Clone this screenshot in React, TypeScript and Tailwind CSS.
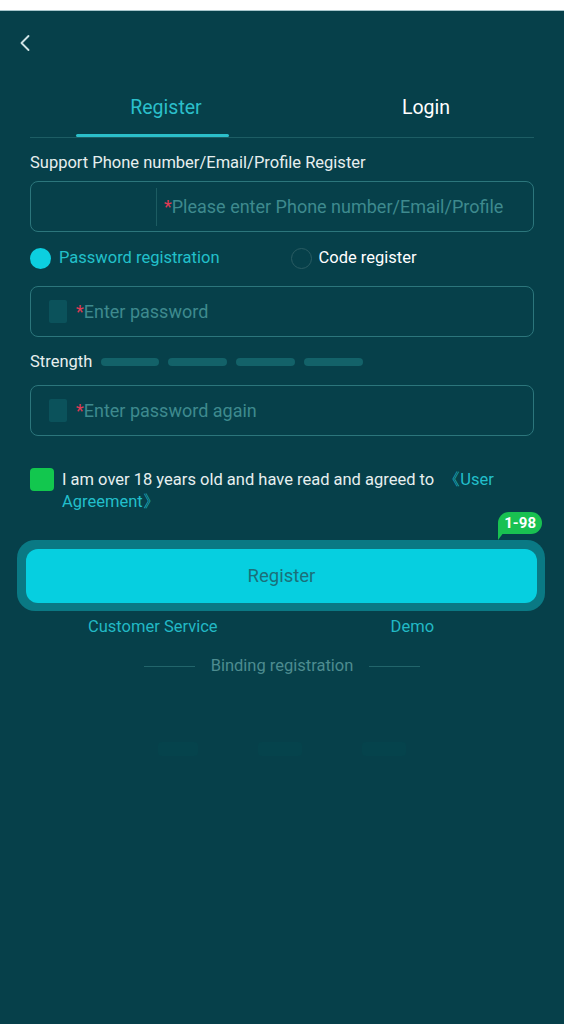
import { ChevronLeft } from "lucide-react";

function Field({ placeholder, square }: { placeholder: string; square?: boolean }) {
  return (
    <div className="h-[51px] rounded-[8px] border border-[#2c767c] flex items-center">
      {square && <div className="ml-[18px] w-[18px] h-[23px] rounded-[2px] bg-[#0b525b]" />}
      <span className="ml-[9px] text-[18px] text-[#3e8a8e]">
        <span className="text-[#e23a55]">*</span>
        {placeholder}
      </span>
    </div>
  );
}

export default function App() {
  return (
    <div className="min-h-[1024px] w-full bg-[#06404a] font-['Roboto',sans-serif]">
      <div className="h-[10px] bg-white" />
      <div className="h-px bg-[#a7c6cc]" />

      {/* header */}
      <div className="h-[64px] flex items-center pl-[11px]">
        <ChevronLeft size={28} strokeWidth={1.6} className="text-[#cfe3e5]" />
      </div>

      <div className="px-[30px]">
        {/* tabs */}
        <div className="flex border-b border-[#1d5d64]">
          <div className="w-[272px] flex flex-col pt-[19px]">
            <div className="h-[28px] flex items-center justify-center text-[19.5px] text-[#2bbfca]">
              Register
            </div>
            <div className="mt-[12px] ml-[46px] w-[153px] h-[3px] rounded-full bg-[#2bbfca]" />
          </div>
          <div className="ml-[24px] w-[200px] pt-[19px]">
            <div className="h-[28px] flex items-center justify-center text-[19.5px] text-white">
              Login
            </div>
          </div>
        </div>

        <div className="mt-[15px] h-[20px] flex items-center text-[16.5px] text-[#e6efef]">
          Support Phone number/Email/Profile Register
        </div>

        <div className="mt-[8px] h-[51px] rounded-[8px] border border-[#2c767c] flex items-center">
          <div className="w-[125px]" />
          <div className="w-px h-[38px] bg-[#1c5c62]" />
          <span className="ml-[7px] text-[18px] text-[#3e8a8e]">
            <span className="text-[#e23a55]">*</span>Please enter Phone number/Email/Profile
          </span>
        </div>

        {/* radio row */}
        <div className="mt-[15px] h-[22px] flex items-center">
          <div className="w-[21px] h-[21px] rounded-full bg-[#0ccfe0]" />
          <span className="ml-[8px] text-[16.5px] text-[#22c0cb]">Password registration</span>
          <div className="ml-[71px] w-[21px] h-[21px] rounded-full border border-[#2a5c63]" />
          <span className="ml-[7px] text-[16.5px] text-white">Code register</span>
        </div>

        <div className="mt-[17px]">
          <Field placeholder="Enter password" square />
        </div>

        {/* strength */}
        <div className="mt-[15px] h-[20px] flex items-center">
          <span className="text-[16.5px] text-[#e6efef]">Strength</span>
          <div className="ml-[9px] flex gap-[9px]">
            <div className="w-[58px] h-[8px] rounded-full bg-[#136269]" />
            <div className="w-[59px] h-[8px] rounded-full bg-[#136269]" />
            <div className="w-[59px] h-[8px] rounded-full bg-[#136269]" />
            <div className="w-[59px] h-[8px] rounded-full bg-[#136269]" />
          </div>
        </div>

        <div className="mt-[13px]">
          <Field placeholder="Enter password again" square />
        </div>

        {/* agreement */}
        <div className="mt-[32px] flex items-start">
          <div className="w-[24px] h-[23px] rounded-[4px] bg-[#12c74e] shrink-0" />
          <div className="ml-[8px] text-[16.5px] leading-[22px] text-[#e6efef] mt-[1px]">
            <div className="flex">
              <span>I am over 18 years old and have read and agreed to</span>
              <span className="ml-[9px] text-[#22bfcb]">《User</span>
            </div>
            <div className="text-[#22bfcb]">Agreement》</div>
          </div>
        </div>

        {/* button */}
        <div className="relative mt-[27px] -ml-[13px] -mr-[11px]">
          <div className="absolute right-[3px] -top-[28px] flex items-end">
            <svg width="6" height="8" viewBox="0 0 6 8" className="absolute -bottom-[6px] left-0">
              <path d="M0 0 L6 0 L0 8 Z" fill="#19c151" />
            </svg>
            <div className="h-[22px] px-[6px] rounded-tl-[11px] rounded-tr-[11px] rounded-br-[11px] bg-[#19c151] text-white text-[15px] font-bold flex items-center">
              1-98
            </div>
          </div>
          <div className="h-[71px] rounded-[18px] bg-[#0a7984] p-[9px] pr-[8px] pb-[8px]">
            <button className="w-full h-full rounded-[12px] bg-[#06cfe0] text-[18.5px] text-[#1b6f79] pt-[2px]">
              Register
            </button>
          </div>
        </div>

        {/* links */}
        <div className="mt-[6px] h-[20px] flex items-center text-[16.5px] text-[#22b9c5]">
          <span className="ml-[58px]">Customer Service</span>
          <span className="ml-[173px]">Demo</span>
        </div>

        <div className="mt-[19px] h-[20px] flex items-center justify-center text-[16.5px] text-[#4d8c90]">
          <div className="w-[51px] h-px bg-[#22656b]" />
          <span className="mx-[16px]">Binding registration</span>
          <div className="w-[51px] h-px bg-[#22656b]" />
        </div>

        <div className="mt-[66px] flex justify-center gap-[60px]">
          <div className="w-[40px] h-[14px] rounded bg-[#05434c]" />
          <div className="w-[44px] h-[14px] rounded bg-[#05434c]" />
          <div className="w-[44px] h-[14px] rounded bg-[#05434c]" />
        </div>
      </div>
    </div>
  );
}
